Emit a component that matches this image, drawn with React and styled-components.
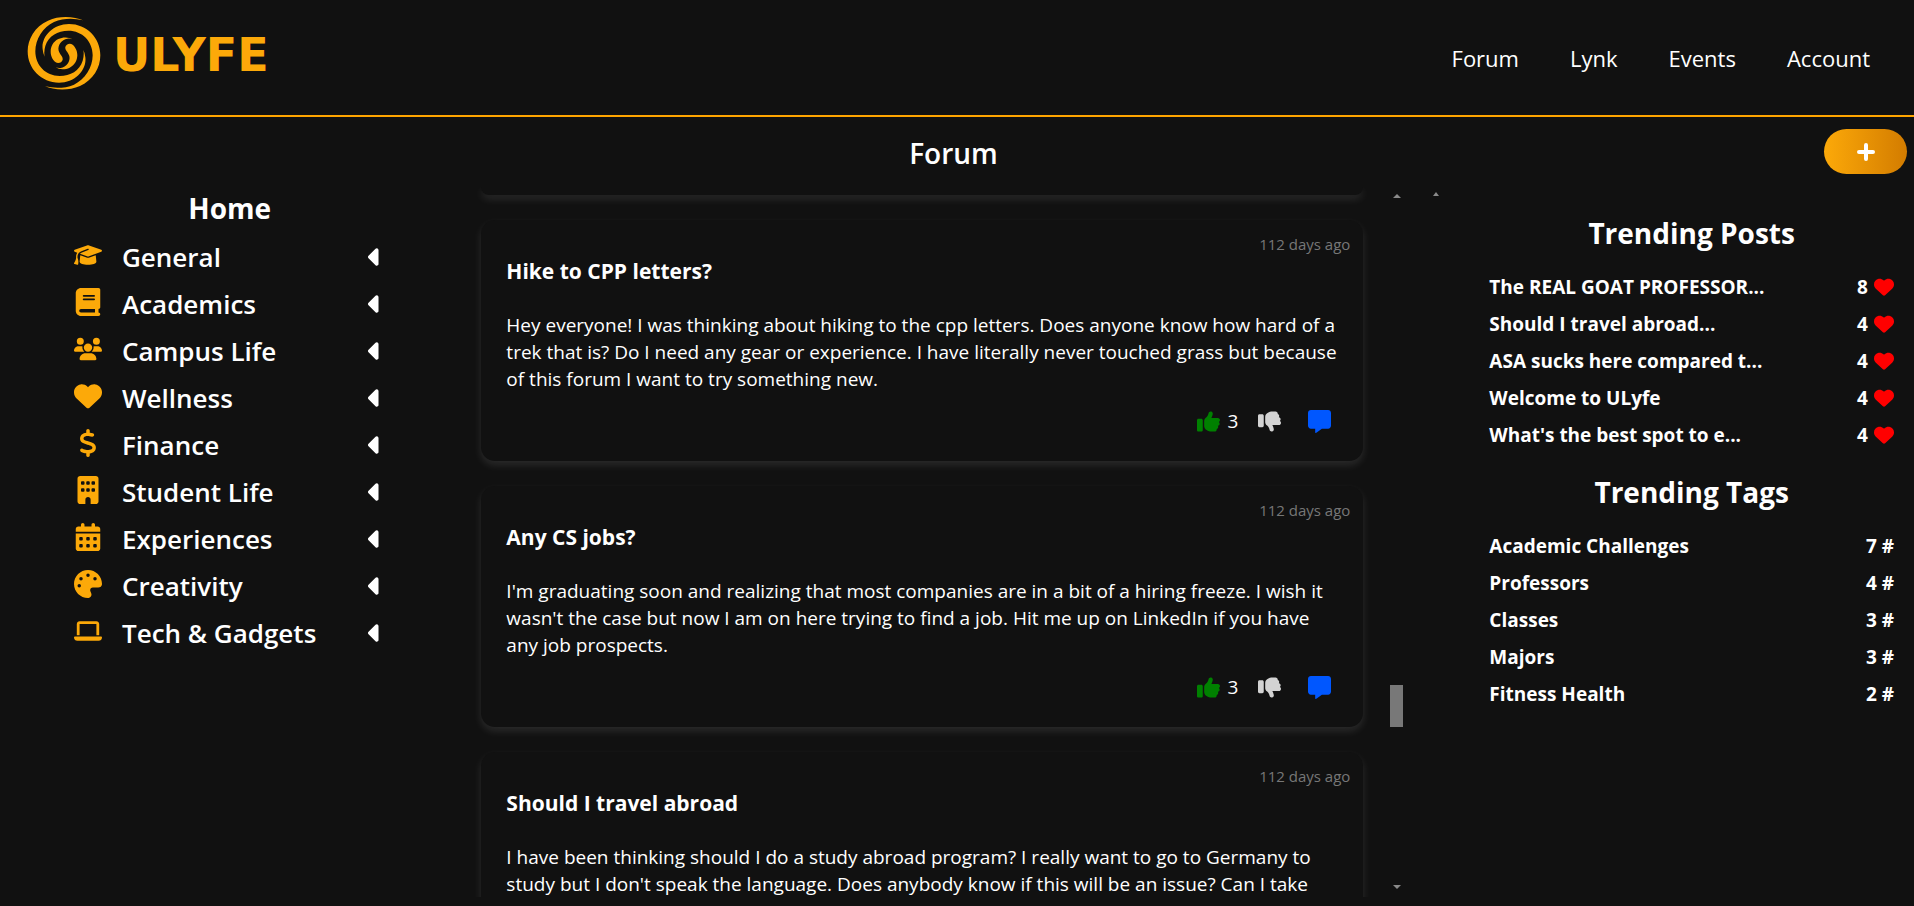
import React from "react";
import styled, { createGlobalStyle } from "styled-components";
import {
  FaGraduationCap,
  FaBook,
  FaUsers,
  FaHeart,
  FaDollarSign,
  FaBuilding,
  FaCalendarDays,
  FaPalette,
  FaLaptop,
  FaCaretLeft,
  FaThumbsUp,
  FaThumbsDown,
  FaMessage,
} from "react-icons/fa6";

const GlobalStyle = createGlobalStyle`
  * { box-sizing: border-box; }
  body {
    margin: 0;
    background: #111;
    color: #fff;
    font-family: "Segoe UI", "Open Sans", "Noto Sans", sans-serif;
  }
  h1, h2, h3, p, ul { margin: 0; padding: 0; }
  ul { list-style: none; }
  a { color: inherit; text-decoration: none; }
  button { font: inherit; color: inherit; background: none; border: 0; padding: 0; cursor: pointer; }
  svg { display: block; flex: none; }
`;

const Page = styled.div`
  display: flex;
  flex-direction: column;
  height: 100vh;
  padding-bottom: 9px;
`;

const Header = styled.header`
  display: flex;
  align-items: center;
  justify-content: space-between;
  height: 117px;
  flex: none;
  padding: 0 44px 0 27px;
  border-bottom: 2px solid #ffa500;
`;

const Brand = styled.a`
  display: flex;
  align-items: center;
  gap: 12px;
  margin-bottom: 9px;
  color: #fca909;
`;

const BrandName = styled.span`
  padding-top: 4px;
  font: bold 46px/48px "DejaVu Sans", sans-serif;
`;

const Nav = styled.nav`
  display: flex;
  gap: 51px;
  font-size: 22px;
  line-height: 32px;
`;

const TitleBar = styled.div`
  display: grid;
  grid-template-columns: 1fr auto 1fr;
  align-items: start;
  height: 70px;
  flex: none;
  padding: 12px 7px 0 0;
`;

const PageTitle = styled.h1`
  grid-column: 2;
  font-size: 28px;
  line-height: 48px;
  font-weight: 600;
`;

const NewPostButton = styled.button`
  grid-column: 3;
  justify-self: end;
  display: flex;
  align-items: center;
  justify-content: center;
  width: 83px;
  height: 45px;
  border-radius: 23px;
  background: linear-gradient(90deg, #fca909, #d37c00);
`;

const Columns = styled.div`
  display: grid;
  grid-template-columns: 24fr 50fr 26fr;
  flex: 1;
  min-height: 0;
`;

const SectionTitle = styled.h2`
  font-size: 28px;
  line-height: 42px;
  font-weight: 700;
  text-align: center;
`;

const Sidebar = styled.aside`
  min-width: 0;
`;

const CategoryList = styled.ul`
  padding: 4px 70px 0 74px;
`;

const Category = styled.button`
  display: flex;
  align-items: center;
  width: 100%;
  height: 47px;
  font-size: 26px;
  font-weight: 600;
  text-align: left;
`;

const CategoryIcon = styled.span`
  color: #fca909;
  margin: 0 20px 4px 0;
`;

const CategoryLabel = styled.span`
  flex: 1;
  white-space: nowrap;
`;

const FeedColumn = styled.main`
  display: flex;
  min-width: 0;
  min-height: 0;
  padding-right: 13px;
`;

const Feed = styled.div`
  display: flex;
  flex-direction: column;
  gap: 25px;
  flex: 1;
  min-width: 0;
  padding: 0 27px 0 22px;
  overflow: hidden;
`;

const Card = styled.article`
  flex: none;
  min-height: 241px;
  padding: 12px 13px 0 25px;
  border-radius: 14px;
  background: #111;
  box-shadow: 0 4px 8px rgba(255, 255, 255, 0.11);
`;

const CardEnd = styled.div`
  flex: none;
  height: 8px;
  border-radius: 0 0 14px 14px;
  background: #111;
  box-shadow: 0 4px 8px rgba(255, 255, 255, 0.11);
`;

const PostTime = styled.p`
  font-size: 15px;
  line-height: 24px;
  color: #777;
  text-align: right;
`;

const PostTitle = styled.h3`
  font-size: 21px;
  line-height: 30px;
  font-weight: 700;
`;

const PostBody = styled.p`
  margin-top: 26px;
  padding-right: 8px;
  font-size: 19px;
  line-height: 27px;
`;

const PostActions = styled.div`
  display: flex;
  align-items: center;
  justify-content: flex-end;
  gap: 20px;
  height: 30px;
  margin-top: 13px;
  padding-right: 19px;
`;

const Action = styled.button`
  display: flex;
  align-items: center;
  gap: 7px;
  margin-left: ${(p) => (p.$spaced ? "7px" : "0")};
  font-size: 19px;
  line-height: 27px;

  svg { color: ${(p) => p.$color}; }
`;

const ScrollTrack = styled.div`
  display: flex;
  flex-direction: column;
  align-items: center;
  width: 13px;
  padding: 7px 0 8px;
`;

const ScrollThumb = styled.div`
  width: 13px;
  height: 42px;
  margin: 487px 0 auto;
  background: #787878;
`;

const Trending = styled.aside`
  display: flex;
  min-width: 0;
  padding: 0 20px 0 17px;
`;

const TrendingPanel = styled.div`
  flex: 1;
  padding: 25px 0 0 50px;
`;

const PanelArrow = styled.div`
  width: 6px;
  padding-top: 5px;
`;

const TrendingList = styled.ul`
  padding: 15px 0 17px;
`;

const TrendingItem = styled.li`
  display: flex;
  justify-content: space-between;
  font-size: 19px;
  line-height: 37px;
  font-weight: 700;
`;

const Score = styled.span`
  display: flex;
  align-items: center;
  gap: 6px;

  svg { margin-bottom: 2px; }
`;

const categories = [
  ["General", FaGraduationCap],
  ["Academics", FaBook],
  ["Campus Life", FaUsers],
  ["Wellness", FaHeart],
  ["Finance", FaDollarSign],
  ["Student Life", FaBuilding],
  ["Experiences", FaCalendarDays],
  ["Creativity", FaPalette],
  ["Tech & Gadgets", FaLaptop],
];

const posts = [
  {
    title: "Hike to CPP letters?",
    body: "Hey everyone! I was thinking about hiking to the cpp letters. Does anyone know how hard of a trek that is? Do I need any gear or experience. I have literally never touched grass but because of this forum I want to try something new.",
    likes: 3,
  },
  {
    title: "Any CS jobs?",
    body: "I'm graduating soon and realizing that most companies are in a bit of a hiring freeze. I wish it wasn't the case but now I am on here trying to find a job. Hit me up on LinkedIn if you have any job prospects.",
    likes: 3,
  },
  {
    title: "Should I travel abroad",
    body: "I have been thinking should I do a study abroad program? I really want to go to Germany to study but I don't speak the language. Does anybody know if this will be an issue? Can I take",
  },
];

const trendingPosts = [
  ["The REAL GOAT PROFESSOR...", 8],
  ["Should I travel abroad...", 4],
  ["ASA sucks here compared t...", 4],
  ["Welcome to ULyfe", 4],
  ["What's the best spot to e...", 4],
];

const trendingTags = [
  ["Academic Challenges", 7],
  ["Professors", 4],
  ["Classes", 3],
  ["Majors", 3],
  ["Fitness Health", 2],
];

const SwirlArm = () => (
  <>
    <path d="M250 59C225 48 180 44 145 60C105 78 84 115 84 152C84 205 125 246 178 246C228 246 262 206 257 170Q256 157 251 148Q254 163 249 180C240 210 212 226 180 226C138 226 107 194 107 152C107 115 130 80 163 64C190 53 220 52 250 59Z" />
    <path d="M218 116C208 109 190 108 176 115C160 123 153 138 153 153C153 167 160 178 167 184C175 190 187 186 189 177C191 168 180 161 177 150C173 133 186 117 203 114Q211 113 218 116Z" />
  </>
);

const Swirl = () => (
  <svg width="74" height="75" viewBox="82 46 222 225" fill="currentColor" aria-hidden="true">
    <SwirlArm />
    <g transform="rotate(180 193 158)">
      <SwirlArm />
    </g>
  </svg>
);

const Plus = () => (
  <svg width="18" height="18" viewBox="0 0 18 18" stroke="#fff" strokeWidth="4" strokeLinecap="round" aria-hidden="true">
    <path d="M9 2V16M2 9H16" />
  </svg>
);

const Arrow = ({ width, down }) => (
  <svg width={width} height="4" viewBox="0 0 8 4" fill="#8a8a8a" preserveAspectRatio="none" aria-hidden="true">
    <path d={down ? "M0 0H8L4 4Z" : "M0 4H8L4 0Z"} />
  </svg>
);

const Post = ({ title, body, likes }) => (
  <Card>
    <PostTime>112 days ago</PostTime>
    <PostTitle>{title}</PostTitle>
    <PostBody>{body}</PostBody>
    {likes !== undefined && (
      <PostActions>
        <Action $color="#008000" aria-label="Like">
          <FaThumbsUp size={23} />
          {likes}
        </Action>
        <Action $color="#d3d3d3" aria-label="Dislike">
          <FaThumbsDown size={23} />
        </Action>
        <Action $color="#0057ff" $spaced aria-label="Comment">
          <FaMessage size={23} />
        </Action>
      </PostActions>
    )}
  </Card>
);

export default function App() {
  return (
    <Page>
      <GlobalStyle />
      <Header>
        <Brand href="#">
          <Swirl />
          <BrandName>ULYFE</BrandName>
        </Brand>
        <Nav>
          <a href="#forum">Forum</a>
          <a href="#lynk">Lynk</a>
          <a href="#events">Events</a>
          <a href="#account">Account</a>
        </Nav>
      </Header>
      <TitleBar>
        <PageTitle>Forum</PageTitle>
        <NewPostButton aria-label="New post">
          <Plus />
        </NewPostButton>
      </TitleBar>
      <Columns>
        <Sidebar>
          <SectionTitle>Home</SectionTitle>
          <CategoryList>
            {categories.map(([label, Icon]) => (
              <li key={label}>
                <Category>
                  <CategoryIcon>
                    <Icon size={28} />
                  </CategoryIcon>
                  <CategoryLabel>{label}</CategoryLabel>
                  <FaCaretLeft size={28} />
                </Category>
              </li>
            ))}
          </CategoryList>
        </Sidebar>
        <FeedColumn>
          <Feed>
            <CardEnd />
            {posts.map((post) => (
              <Post key={post.title} {...post} />
            ))}
          </Feed>
          <ScrollTrack>
            <Arrow width={8} />
            <ScrollThumb />
            <Arrow width={8} down />
          </ScrollTrack>
        </FeedColumn>
        <Trending>
          <PanelArrow>
            <Arrow width={6} />
          </PanelArrow>
          <TrendingPanel>
            <SectionTitle>Trending Posts</SectionTitle>
            <TrendingList>
              {trendingPosts.map(([label, count]) => (
                <TrendingItem key={label}>
                  <a href="#post">{label}</a>
                  <Score>
                    {count}
                    <FaHeart size={20} color="#f00" />
                  </Score>
                </TrendingItem>
              ))}
            </TrendingList>
            <SectionTitle>Trending Tags</SectionTitle>
            <TrendingList>
              {trendingTags.map(([label, count]) => (
                <TrendingItem key={label}>
                  <a href="#tag">{label}</a>
                  <Score>{count} #</Score>
                </TrendingItem>
              ))}
            </TrendingList>
          </TrendingPanel>
        </Trending>
      </Columns>
    </Page>
  );
}
